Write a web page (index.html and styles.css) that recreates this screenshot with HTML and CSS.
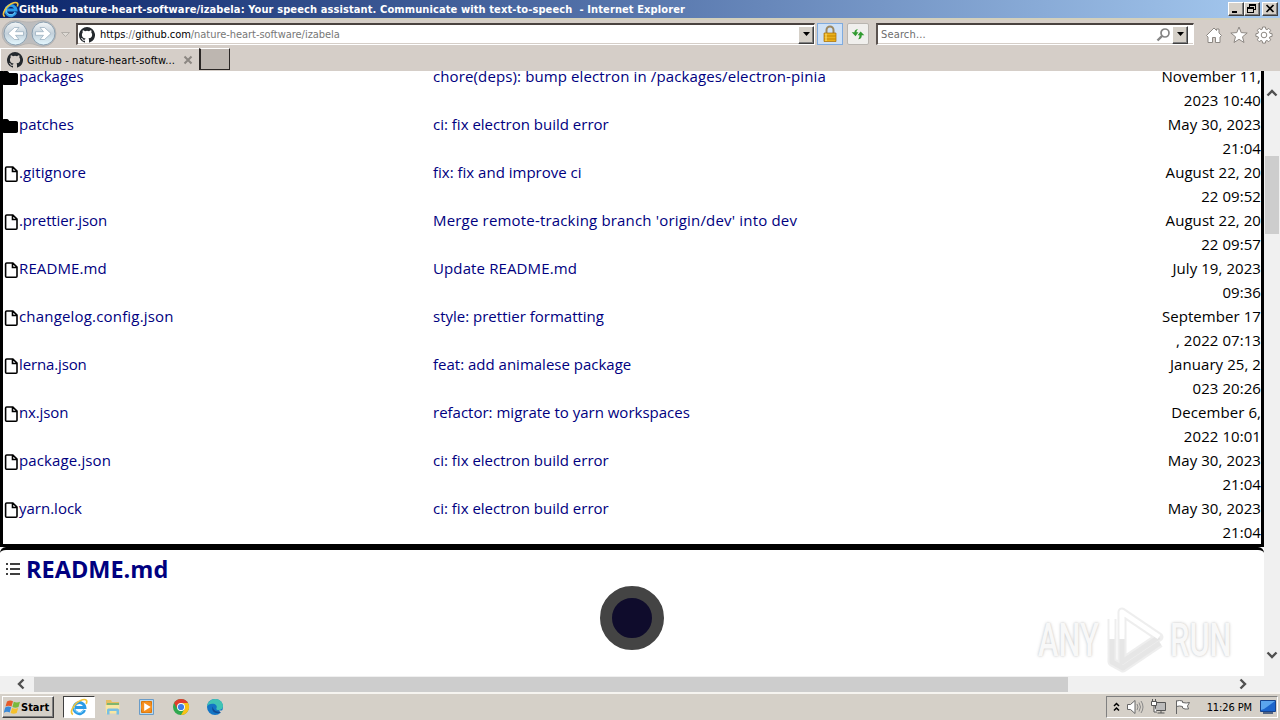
FILE: index.html
```html
<!DOCTYPE html>
<html lang="en">
<head>
    <meta charset="UTF-8">
    <meta name="viewport" content="width=device-width, initial-scale=1.0">
    <title>GitHub - nature-heart-software/izabela</title>
    <link rel="stylesheet" href="styles.css">
</head>
<body>
    <!-- shared icons -->
    <svg class="sprite" aria-hidden="true">
        <symbol id="ie" viewBox="0 0 18 18">
            <path d="M14.600 12A5.500 5.500 0 1 1 14.900 9.500H5.500" fill="none" stroke="#2b9be6" stroke-width="3"/>
            <path d="M13.800 12.200A5 5 0 0 1 4.600 8.500" fill="none" stroke="#7ed2fa" stroke-width="1"/>
            <path d="M3 16.500C-1.500 15 4.500 4 12.500 1.800c4-1 5 1 3.700 4" fill="none" stroke="#f1c43c" stroke-width="1.700"/>
        </symbol>
        <symbol id="github" viewBox="0 0 16 16">
            <path fill="#24292e" d="M8 0a8 8 0 0 0-2.530 15.590c.4.070.550-.170.550-.380l-.010-1.490c-2.010.370-2.530-.490-2.690-.940-.090-.230-.480-.940-.820-1.130-.280-.150-.680-.520-.010-.530.630-.010 1.080.580 1.230.820.720 1.210 1.870.870 2.330.660.070-.520.280-.870.510-1.070-1.780-.2-3.640-.890-3.640-3.950 0-.870.310-1.590.820-2.150-.080-.2-.360-1.020.080-2.120 0 0 .670-.210 2.200.820a7.600 7.600 0 0 1 4 0c1.530-1.040 2.200-.820 2.200-.820.440 1.100.160 1.920.080 2.120.510.560.820 1.270.820 2.150 0 3.070-1.870 3.750-3.650 3.950.290.250.540.730.540 1.480l-.010 2.200c0 .210.150.460.550.380A8 8 0 0 0 8 0z"/>
        </symbol>
        <symbol id="folder" viewBox="0 0 16 16">
            <path d="M1.750 1C.780 1 0 1.780 0 2.750v10.500C0 14.200.8 15 1.750 15h12.500c.970 0 1.750-.780 1.750-1.750v-8.500C16 3.780 15.200 3 14.250 3H7.500a.250.250 0 0 1-.2-.1l-.9-1.200C6.070 1.260 5.550 1 5 1z"/>
        </symbol>
        <symbol id="file" viewBox="0 0 16 16">
            <path d="M3.750 1h6.100L14 5.200v9c0 .6-.4 1-1 1H3.600c-.6 0-1-.4-1-1V2c0-.6.500-1 1.150-1zM9.500 1.200V5.500h4.300" fill="none" stroke="#000" stroke-width="1.600"/>
        </symbol>
    </svg>

    <header class="titlebar">
        <svg class="title-icon"><use href="#ie"/></svg>
        <span class="title-text">GitHub - nature-heart-software/izabela: Your speech assistant. Communicate with text-to-speech&nbsp; - Internet Explorer</span>
        <div class="window-buttons">
            <button><svg width="14" height="12"><path d="M3 8h5v2H3z"/></svg></button>
            <button><svg width="14" height="12"><path d="M4 1h7v6H9V6h1V3H5v1H4zM2 4h7v6H2zm1 2v3h5V6z" fill-rule="evenodd"/></svg></button>
            <button class="close"><svg width="14" height="12"><path d="M3.500 2l7 7M10.500 2l-7 7" stroke="#000" stroke-width="1.700"/></svg></button>
        </div>
    </header>

    <nav class="toolbar">
        <svg class="history" width="72" height="29" viewBox="0 0 72 29">
            <defs>
                <linearGradient id="orb" x1="0" y1="0" x2="0" y2="1">
                    <stop offset="0" stop-color="#f4f7f8"/>
                    <stop offset=".5" stop-color="#c3d0da"/>
                    <stop offset="1" stop-color="#e4f8ff"/>
                </linearGradient>
            </defs>
            <path d="M15 .5c6 0 7 1.500 14 1.500s8-1.500 14-1.500a13 13 0 0 1 0 26c-6 0-8-3-14-3s-8 3-14 3a13 13 0 0 1 0-26z" fill="#bdbdbe" stroke="#b4b1af" stroke-width=".8"/>
            <circle cx="15.500" cy="13.500" r="11.500" fill="url(#orb)" stroke="#8a9fb0"/>
            <circle cx="43.500" cy="13.500" r="11.500" fill="url(#orb)" stroke="#8a9fb0"/>
            <path d="M23.500 11.700h-8l3.500-4.200h-4.500l-6.500 6 6.500 6h4.500l-3.500-4.200h8zM35.500 11.700h8L40 7.500h4.500l6.500 6-6.500 6H40l3.500-4.200h-8z" fill="#fff" stroke="#93aabb" stroke-width=".7"/>
            <path d="M61.500 12.500h8l-4 4z" fill="#dedad5" stroke="#b2aea9"/>
        </svg>
        <div class="field address">
            <svg class="site-icon"><use href="#github"/></svg>
            <span class="url"><b>https</b>://<b>github.com</b>/nature-heart-software/izabela</span>
            <button class="drop"><svg width="9" height="5"><path d="M1 0h7L4.500 4z"/></svg></button>
        </div>
        <button class="lock">
            <svg width="16" height="18" viewBox="0 0 16 18">
                <path d="M4.500 8V5a3.500 3.500 0 0 1 7 0v3" fill="none" stroke="#9b8760" stroke-width="2"/>
                <path d="M2 8h12v8.500H2z" fill="#eab11d" stroke="#a66c00" stroke-width=".7"/>
                <path d="M2 11h12M2 14h12" stroke="#c38300"/>
                <path d="M4 8.500v7.500" stroke="#ffe37c"/>
            </svg>
        </button>
        <button class="refresh">
            <svg width="16" height="14" viewBox="0 0 18 16">
                <path d="M9 2.500C6 2.500 5 4 5 6H1.800l4.400 4.500L9.500 6H7.300c0-1.500.4-2.500 1.700-3.500zM9 14c3 0 4.300-1.500 4.300-4.500h2.900L12 5 8.500 9.500h2.200c0 2-.5 3.500-1.700 4.500z" fill="#319b31"/>
            </svg>
        </button>
        <div class="field search">
            <span class="hint">Search...</span>
            <svg width="16" height="16" viewBox="0 0 16 16"><circle cx="9" cy="6" r="4" fill="none" stroke="#858585" stroke-width="1.700"/><path d="M6 9l-4.500 4.500" stroke="#858585" stroke-width="2.400"/></svg>
            <button class="drop"><svg width="9" height="5"><path d="M1 0h7L4.500 4z"/></svg></button>
        </div>
        <div class="commands">
            <svg width="18" height="18" viewBox="0 0 18 18"><path d="M1.500 9.500L9 2l2.500 2.500V3H14v4l2.500 2.500L15 11v5.500h-4.500v-5h-3v5H3V11z"/></svg>
            <svg width="18" height="18" viewBox="0 0 18 18"><path d="M9 1l2.200 5.600 6 .4-4.700 3.800L14 16.500l-5-3.200-5 3.200 1.500-5.700L.8 7l6-.4z"/></svg>
            <svg width="18" height="18" viewBox="0 0 18 18"><path d="M7.600 1h2.800l.4 2.200 1.100.5 1.900-1.300 1.900 1.900-1.300 1.900.5 1.100 2.200.4v2.700l-2.200.4-.5 1.100 1.300 1.900-1.900 1.900-1.900-1.300-1.100.5-.4 2.200H7.600l-.4-2.200-1.100-.5-1.900 1.300-1.900-1.900 1.300-1.900-.5-1.100L.9 10.400V7.700l2.200-.4.500-1.100-1.300-1.900 1.900-1.900 1.900 1.300 1.100-.5z"/><circle cx="9" cy="9" r="2.800"/></svg>
        </div>
    </nav>

    <div class="tabs">
        <div class="tab">
            <svg class="site-icon"><use href="#github"/></svg>
            <span class="tab-title">GitHub - nature-heart-softw...</span>
            <svg width="10" height="10" viewBox="0 0 10 10"><path d="M1.500 1.500l7 7M8.500 1.500l-7 7" stroke="#8c8782" stroke-width="2"/></svg>
        </div>
        <button class="new-tab"></button>
    </div>

    <main class="viewport">
        <div class="page">
            <div class="files">
                <div class="row"><svg class="folder"><use href="#folder"/></svg><a class="name">packages</a><a class="commit wide">chore(deps): bump electron in /packages/electron-pinia</a><span class="date">November 11,<br>2023 10:40</span></div>
                <div class="row"><svg class="folder"><use href="#folder"/></svg><a class="name">patches</a><a class="commit">ci: fix electron build error</a><span class="date">May 30, 2023<br>21:04</span></div>
                <div class="row"><svg><use href="#file"/></svg><a class="name wide">.gitignore</a><a class="commit">fix: fix and improve ci</a><span class="date">August 22, 20<br>22 09:52</span></div>
                <div class="row"><svg><use href="#file"/></svg><a class="name tight">.prettier.json</a><a class="commit wider">Merge remote-tracking branch 'origin/dev' into dev</a><span class="date">August 22, 20<br>22 09:57</span></div>
                <div class="row"><svg><use href="#file"/></svg><a class="name wide">README.md</a><a class="commit wide">Update README.md</a><span class="date">July 19, 2023<br>09:36</span></div>
                <div class="row"><svg><use href="#file"/></svg><a class="name wider">changelog.config.json</a><a class="commit">style: prettier formatting</a><span class="date">September 17<br>, 2022 07:13</span></div>
                <div class="row"><svg><use href="#file"/></svg><a class="name tight">lerna.json</a><a class="commit">feat: add animalese package</a><span class="date">January 25, 2<br>023 20:26</span></div>
                <div class="row"><svg><use href="#file"/></svg><a class="name tight">nx.json</a><a class="commit">refactor: migrate to yarn workspaces</a><span class="date">December 6,<br>2022 10:01</span></div>
                <div class="row"><svg><use href="#file"/></svg><a class="name wide">package.json</a><a class="commit">ci: fix electron build error</a><span class="date">May 30, 2023<br>21:04</span></div>
                <div class="row"><svg><use href="#file"/></svg><a class="name">yarn.lock</a><a class="commit">ci: fix electron build error</a><span class="date">May 30, 2023<br>21:04</span></div>
            </div>
            <section class="readme">
                <div class="readme-head">
                    <svg width="16" height="16" viewBox="0 0 16 16"><path d="M5 3h10M5 8h10M5 13h10M1 3h2M1 8h2M1 13h2" stroke="#000" stroke-width="1.500"/></svg>
                    <h2>README.md</h2>
                </div>
                <div class="avatar"></div>
            </section>
            <div class="watermark">
                <span class="any">ANY</span>
                <svg width="60" height="66" viewBox="0 0 60 66">
                    <g fill="none" stroke-linejoin="round">
                        <path d="M16 5l37 25-37 25zM6 12v43l11 6 37-25" stroke="#e2e2e2" stroke-width="9" opacity=".6"/>
                        <path d="M16 28v27l37-25M6 28v27l11 6 37-25" stroke="#e6e6e6" stroke-width="5"/>
                        <path d="M6 32V12M16 32V5l37 25" stroke="#fff" stroke-width="5"/>
                    </g>
                </svg>
                <span class="run">RUN</span>
            </div>
        </div>
        <div class="vscroll">
            <svg width="12" height="8" viewBox="0 0 12 8"><path d="M1.500 6.500L6 2l4.500 4.500"/></svg>
            <div class="vthumb"></div>
            <svg width="12" height="8" viewBox="0 0 12 8"><path d="M1.500 1.500L6 6l4.500-4.500"/></svg>
        </div>
        <div class="hscroll">
            <svg width="8" height="12" viewBox="0 0 8 12"><path d="M6.500 1.500L2 6l4.500 4.500"/></svg>
            <div class="hthumb"></div>
            <svg width="8" height="12" viewBox="0 0 8 12"><path d="M1.500 1.500L6 6l-4.500 4.500"/></svg>
        </div>
    </main>

    <footer class="taskbar">
        <button class="start">
            <svg width="17" height="16" viewBox="0 0 17 16">
                <path d="M3 2.500q3-2 6-.3L7.500 7.500q-3-1.500-6 0z" fill="#e65b2a"/>
                <path d="M9.800 2.700q3 1.600 6.200 0L14.500 8q-3 1.500-6.100 0z" fill="#79b93c"/>
                <path d="M1.200 8.500q3-1.800 6-.2L5.700 13.500q-3-1.500-6 .3z" fill="#3b8ad8"/>
                <path d="M8.100 9q3 1.500 6.100 0l-1.500 5q-3 1.600-6.100 0z" fill="#f5c02c"/>
            </svg>
            Start
        </button>
        <div class="apps">
            <div class="app active"><svg width="18" height="18"><use href="#ie"/></svg></div>
            <div class="app">
                <svg width="18" height="18" viewBox="0 0 18 18">
                    <path d="M2 4V2h5l1 2h7v11H2z" fill="#e5be62"/><path d="M3 5h12v2H3z" fill="#7fb56e"/>
                    <path d="M1.500 7h14l-.5 8.500H2z" fill="#f8e6a2"/>
                    <path d="M3 16.500V12q0-1.500 1.500-1.500h9Q15 10.500 15 12v4.500h-2.500V13h-7v3.500z" fill="#79bfe3"/>
                </svg>
            </div>
            <div class="app">
                <svg width="18" height="18" viewBox="0 0 18 18">
                    <path d="M1.500 1.500h14v15h-14z" fill="#b9d8ee" stroke="#6a9cc8"/>
                    <path d="M3.500 3.500h10v11h-10z" fill="#f08a1d" stroke="#d9770c"/>
                    <circle cx="8.500" cy="9" r="5.500" fill="#f58f1f"/>
                    <path d="M6.200 5l6.500 4-6.500 4z" fill="#fff"/>
                </svg>
            </div>
            <div class="app">
                <svg width="18" height="18" viewBox="0 0 18 18">
                    <circle cx="9" cy="9" r="8" fill="#2fa84f"/>
                    <path d="M2.100 5A8 8 0 0 1 16 5H9a4 4 0 0 0-3.500 6z" fill="#e23c2e"/>
                    <path d="M9 17a8 8 0 0 0 7-12H9a4 4 0 0 1 3.500 6z" fill="#fbc116"/>
                    <circle cx="9" cy="9" r="4" fill="#fff"/><circle cx="9" cy="9" r="3.100" fill="#3f7de8"/>
                </svg>
            </div>
            <div class="app">
                <svg width="18" height="18" viewBox="0 0 18 18">
                    <circle cx="9" cy="9" r="8" fill="#1375c5"/>
                    <path d="M1 8.500C1.600 4 5 1 9.200 1 14 1 17 4.500 17 8c0 2.700-2 4-4.200 4-2 0-3-.8-2.300-1.800C11.700 7.500 9 5.500 6.300 5.700 3.800 5.800 1.700 7 1 8.500z" fill="#40c4b4"/>
                    <path d="M6.800 8.500c-2 4 1.700 8 7.600 6.200 1-.4 1.600-1 1.300-1.300-.5-.4-1.200.3-3 .3-3.500 0-5.800-2.500-5.900-5.200z" fill="#114b93"/>
                    <path d="M13 12.500h5v2.500h-3z" fill="#d5d0c8"/>
                </svg>
            </div>
        </div>
        <div class="tray">
            <svg width="7" height="10" viewBox="0 0 7 10"><path d="M1 4l2.500-2.500L6 4M1 8.500L3.500 6 6 8.500" fill="none" stroke="#000" stroke-width="1.500"/></svg>
            <svg width="18" height="16" viewBox="0 0 18 16"><path d="M1.500 5.500h3L9 1.500v13l-4.500-4h-3z" fill="#fff" stroke="#666"/><path d="M11 5q2 3 0 6M13 3.500q3 4.500 0 9M15 2q4 6 0 12" fill="none" stroke="#888"/></svg>
            <svg width="18" height="16" viewBox="0 0 18 16"><path d="M5.500 3.500h10v8h-10zM7.500 14h7M11 11v3" fill="#bbb" stroke="#555"/><path d="M1.500 2.500h5v4h-5zM2.500 0v2M5.500 0v2M4 7v6h3" fill="#fff" stroke="#555"/></svg>
            <svg width="18" height="16" viewBox="0 0 18 16"><path d="M2.500 15V1.500M2.500 2q3-1 6 0v1.500q4 1 7 0l-2 3.500 1 3q-4 .5-6-1V7.500q-3-1-6 0z" fill="#fff" stroke="#666"/></svg>
            <span class="clock">11:26 PM</span>
            <svg class="desktop" width="16" height="14" viewBox="0 0 16 14"><path d="M.5.500h15v11H.5z" fill="#1c65cc" stroke="#16438d"/><path d="M1 1h14L4 9 1 10z" fill="#5ba5ee"/><path d="M3 13h10" stroke="#25416d" stroke-width="1.500"/></svg>
        </div>
    </footer>
</body>
</html>
```

FILE: styles.css
```css
* {
    box-sizing: border-box;
}
body {
    margin: 0;
    width: 1280px;
    height: 720px;
    overflow: hidden;
    display: flex;
    flex-direction: column;
    background: #d5d0c8;
    font-family: "DejaVu Sans Condensed", "DejaVu Sans", sans-serif;
    font-stretch: condensed;
    font-size: 11px;
    color: #000;
}
svg {
    flex: none;
    display: block;
}
button {
    border: 0;
    padding: 0;
    font: inherit;
    color: inherit;
    background: #d5d0c8;
}
.sprite {
    display: none;
}

/* window frame */
.titlebar {
    height: 18px;
    flex: none;
    display: flex;
    align-items: center;
    padding: 0 2px 0 2px;
    background: linear-gradient(to right, #0a246a, #a6caf0);
    color: #fff;
    font-weight: bold;
}
.title-icon {
    width: 17px;
    height: 17px;
}
.title-text {
    letter-spacing: 0.11px;
    white-space: nowrap;
}
.window-buttons {
    margin-left: auto;
    display: flex;
}
.window-buttons button,
.drop {
    border: 1px solid;
    border-color: #fff #404040 #404040 #fff;
    box-shadow: inset -1px -1px #808080;
}
.window-buttons button {
    width: 16px;
    height: 14px;
}
.window-buttons .close {
    margin-left: 2px;
}
.toolbar {
    height: 30px;
    flex: none;
    display: flex;
    align-items: center;
    background: #d5cec8;
    border-top: 2px solid #d3d0bc;
}
.history {
    margin-right: 4px;
}
.field {
    height: 22px;
    display: flex;
    align-items: center;
    background: #fff;
    border: 1px solid #fff;
    border-top: 2px solid #4a4340;
    border-left: 2px solid #5b5350;
    box-shadow: inset 0 -1px #d5cec8;
}
.address {
    width: 739px;
    padding-left: 1px;
}
.site-icon {
    width: 16px;
    height: 16px;
}
.url {
    margin: -1px 0 0 5px;
    color: #777;
    letter-spacing: -0.04px;
}
.url b {
    font-weight: normal;
    color: #000;
}
.drop {
    width: 16px;
    height: 18px;
    display: flex;
    align-items: center;
    justify-content: center;
    margin-left: auto;
}
.lock,
.refresh {
    display: flex;
    align-items: center;
    justify-content: center;
    height: 22px;
}
.lock {
    width: 26px;
    margin-left: 2px;
    background: #cfe1f6;
    border: 1px solid #7fabdf;
}
.refresh {
    width: 22px;
    margin-left: 4px;
    background: #f0efed;
    border: 1px solid #b9b5b0;
    border-radius: 2px;
}
.search {
    width: 318px;
    margin-left: 7px;
    padding-right: 5px;
}
.hint {
    margin: -1px auto 0 3px;
    color: #6d6d6d;
    letter-spacing: 0.15px;
}
.search .drop {
    margin-left: 0;
}
.commands {
    display: flex;
    gap: 7px;
    margin: 2px 0 0 11px;
}
.commands svg {
    fill: #fff;
    stroke: #8d8883;
    stroke-width: 1;
}
.tabs {
    height: 23px;
    flex: none;
    display: flex;
    background: #d5cec8;
}
.tab {
    width: 199px;
    display: flex;
    align-items: center;
    padding: 0 6px 0 6px;
    border-top: 1px solid #fff;
    border-left: 1px solid #fff;
}
.tab-title {
    margin: 0 auto 0 4px;
    letter-spacing: 0.1px;
}
.new-tab {
    width: 31px;
    height: 22px;
    background: #bdb6b0;
    border: 1px solid #2b2725;
    border-left-width: 2px;
    border-top-color: #fff;
}

/* page area */
.viewport {
    flex: 1;
    min-height: 0;
    display: grid;
    grid-template: 605px 16px / 1264px 16px;
    background: #f0f0f0;
}
.page {
    position: relative;
    overflow: hidden;
    background: #fff;
    font-family: "Open Sans", sans-serif;
    font-stretch: normal;
    font-size: 15px;
}
.files {
    margin-top: -7px;
    border: 3px solid #000;
    border-top: 0;
}
.row {
    height: 48px;
    display: grid;
    grid-template-columns: 16px 414px 1fr 110px;
    line-height: 24px;
    white-space: nowrap;
}
.row svg {
    width: 16px;
    height: 16px;
    margin-top: 6px;
}
.row .folder {
    margin-left: -1px;
}
.name,
.commit {
    color: #000080;
}
.wide {
    letter-spacing: 0.12px;
}
.wider {
    letter-spacing: 0.18px;
}
.tight {
    letter-spacing: -0.13px;
}
.date {
    text-align: right;
    letter-spacing: 0.07px;
}
.readme {
    border-top: 3px solid #000;
    border-radius: 6px 6px 0 0;
}
.readme-head {
    display: flex;
    align-items: center;
    height: 38px;
    padding-left: 5px;
    gap: 5px;
}
.readme-head h2 {
    margin: 0;
    font-size: 23.5px;
    line-height: 38px;
    color: #000080;
}
.avatar {
    width: 64px;
    height: 64px;
    margin: -2px auto 0;
    border: 12px solid #444;
    border-radius: 50%;
    background: #0f0c2c;
}
.watermark {
    position: absolute;
    left: 1038px;
    top: 536px;
    display: flex;
    align-items: center;
    gap: 4px;
    font-family: Roboto, sans-serif;
    font-size: 46px;
    font-weight: 500;
    line-height: 66px;
    color: #f8f8f8;
    text-shadow: 0 0 4px #ccc, 0 0 2px #ddd;
}
.any,
.run {
    width: 64px;
    transform: scaleX(0.67);
    transform-origin: left;
}
.vscroll {
    display: flex;
    flex-direction: column;
    align-items: center;
    padding: 18px 0 17px;
}
.vscroll svg,
.hscroll svg {
    fill: none;
    stroke: #505050;
    stroke-width: 2.4;
}
.vthumb {
    width: 14px;
    height: 78px;
    margin: 59px 0 auto;
    background: #cdcdcd;
}
.hscroll {
    display: flex;
    align-items: center;
    padding: 0 17px;
}
.hthumb {
    width: 1034px;
    height: 15px;
    margin: 0 auto 0 9px;
    background: #cdcdcd;
}

/* taskbar */
.taskbar {
    height: 28px;
    flex: none;
    display: flex;
    align-items: center;
    border-top: 2px solid #f6f4f0;
    background: #d5d0c8;
    padding: 1px 2px;
}
.start {
    width: 52px;
    height: 22px;
    display: flex;
    align-items: center;
    gap: 0;
    padding-left: 1px;
    font-weight: bold;
    border: 1px solid;
    border-color: #fff #404040 #404040 #fff;
    box-shadow: inset -1px -1px #808080;
}
.apps {
    display: flex;
    gap: 2px;
    margin-left: 9px;
}
.app {
    width: 32px;
    height: 22px;
    display: flex;
    align-items: center;
    justify-content: center;
}
.active {
    background: #fff;
    border: 1px solid;
    border-color: #404040 #fff #fff #404040;
}
.tray {
    width: 172px;
    height: 22px;
    margin-left: auto;
    display: flex;
    align-items: center;
    gap: 6px;
    padding: 0 1px 0 6px;
    border: 1px solid;
    border-color: #808080 #fff #fff #808080;
}
.clock {
    margin-left: auto;
    white-space: nowrap;
    letter-spacing: -0.1px;
}
.desktop {
    margin-left: 2px;
}
```
